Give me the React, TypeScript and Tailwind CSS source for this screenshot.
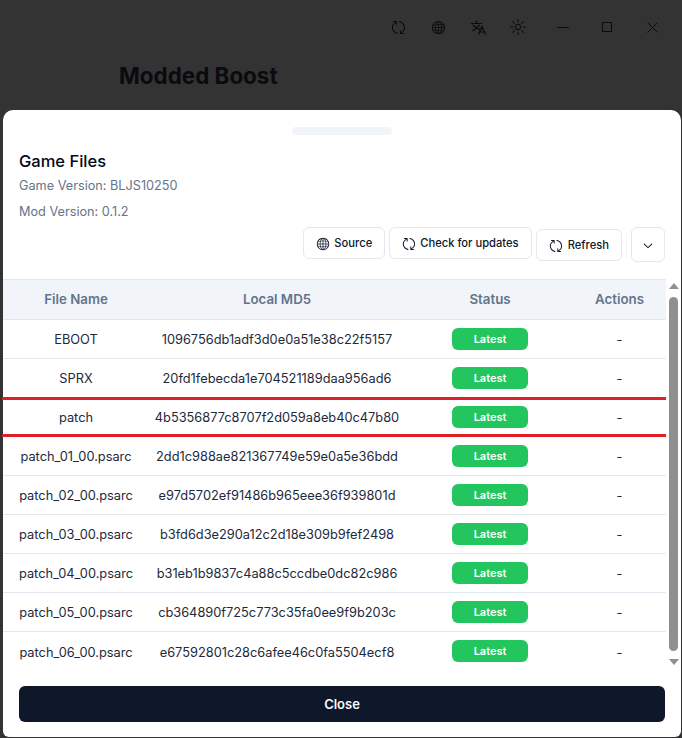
import React from 'react';
import { RxUpdate, RxGlobe, RxSun, RxChevronDown } from 'react-icons/rx';

const files = [
  ['EBOOT', '1096756db1adf3d0e0a51e38c22f5157'],
  ['SPRX', '20fd1febecda1e704521189daa956ad6'],
  ['patch', '4b5356877c8707f2d059a8eb40c47b80'],
  ['patch_01_00.psarc', '2dd1c988ae821367749e59e0a5e36bdd'],
  ['patch_02_00.psarc', 'e97d5702ef91486b965eee36f939801d'],
  ['patch_03_00.psarc', 'b3fd6d3e290a12c2d18e309b9fef2498'],
  ['patch_04_00.psarc', 'b31eb1b9837c4a88c5ccdbe0dc82c986'],
  ['patch_05_00.psarc', 'cb364890f725c773c35fa0ee9f9b203c'],
  ['patch_06_00.psarc', 'e67592801c28c6afee46c0fa5504ecf8'],
];

function Scrollbar() {
  return (
    <div className="w-[15px] shrink-0 flex flex-col items-center bg-white">
      <div className="mt-[4px] w-0 h-0 border-x-[5px] border-x-transparent border-b-[6px] border-b-[#8f8f8f]" />
      <div className="mt-[8px] w-[9px] h-[354px] rounded-full bg-[#8f8f8f]" />
      <div className="mt-[8px] w-0 h-0 border-x-[5px] border-x-transparent border-t-[6px] border-t-[#8f8f8f]" />
    </div>
  );
}

export default function App() {
  return (
    <div className="relative h-[738px] w-[682px] overflow-hidden bg-[#333333] flex flex-col font-['Inter',sans-serif]">
      {/* dimmed window behind the sheet */}
      <div className="h-[110px] shrink-0 relative">
        <div className="flex items-center pt-[19px] pl-[391px] text-[#0a0a0f]">
          <RxUpdate className="w-[15px] h-[15px]" />
          <RxGlobe className="ml-[25px] w-[15px] h-[15px]" />
          <svg className="ml-[25px] w-[15px] h-[15px]" viewBox="0 0 15 15" fill="none" stroke="currentColor" strokeWidth="1.2">
            <path d="M0 3.5h11M5.5 0.5v3M1.5 5l7.5 5M9 5l-7.5 6M7.5 14.5l3.5-8 3.5 8M8.8 12h4.4" />
          </svg>
          <RxSun className="ml-[24px] w-[16px] h-[16px]" />
          <svg className="ml-[31px] w-[12px] h-[12px]" viewBox="0 0 12 12" fill="none" stroke="currentColor" strokeWidth="1">
            <path d="M0 6.5h12" />
          </svg>
          <svg className="ml-[33px] w-[10px] h-[10px]" viewBox="0 0 10 10" fill="none" stroke="currentColor" strokeWidth="1">
            <rect x="0.5" y="0.5" width="9" height="9" />
          </svg>
          <svg className="ml-[35px] w-[11px] h-[11px]" viewBox="0 0 11 11" fill="none" stroke="currentColor" strokeWidth="1">
            <path d="M0.5 0.5l10 10M10.5 0.5l-10 10" />
          </svg>
        </div>
        <h1 className="mt-[27px] ml-[119px] text-[22.4px] leading-[28px] font-bold text-[#0a0a0f]">Modded Boost</h1>
      </div>

      {/* sheet */}
      <div className="flex-1 ml-[3px] mr-[1px] mb-[1px] bg-white rounded-t-[10px] rounded-b-[6px] flex flex-col min-h-0">
        <div className="mt-[17px] self-center w-[100px] h-[8px] rounded-full bg-[#f1f5f9]" />
        <div className="px-[16px] mt-[14px]">
          <h2 className="text-[16.5px] leading-[24px] font-medium text-[#020817]">Game Files</h2>
          <p className="mt-[3px] text-[12.7px] leading-[20px] text-[#64748b]">Game Version: BLJS10250</p>
          <p className="mt-[6px] text-[12.7px] leading-[20px] text-[#64748b]">Mod Version: 0.1.2</p>
        </div>

        <div className="mt-[5px] pr-[16px] flex justify-end items-start h-[36px] text-[11.2px] font-medium text-[#0f172a]">
          <button className="h-[32px] px-[12px] pt-px flex items-center gap-[4px] rounded-md border border-[#e2e8f0] bg-white">
            <RxGlobe className="w-[14px] h-[14px]" />
            Source
          </button>
          <button className="ml-[4px] h-[32px] px-[12px] pt-px flex items-center gap-[4px] rounded-md border border-[#e2e8f0] bg-white">
            <RxUpdate className="w-[14px] h-[14px]" />
            Check for updates
          </button>
          <button className="ml-[4px] mt-[2px] h-[32px] px-[12px] pt-px flex items-center gap-[5px] rounded-md border border-[#e2e8f0] bg-white">
            <RxUpdate className="w-[14px] h-[14px]" />
            Refresh
          </button>
          <div className="ml-[4px] mt-[6px] w-px h-[24px] bg-[#f1f5f9]" />
          <button className="ml-[4px] w-[34px] h-[35px] flex items-center justify-center rounded-md border border-[#e2e8f0] bg-white">
            <RxChevronDown className="w-[14px] h-[14px]" />
          </button>
        </div>

        <div className="mt-[16px] flex h-[391px] overflow-hidden">
          <table className="w-[663px] h-fit table-fixed border-collapse text-[12.8px] text-[#1e293b]">
            <colgroup>
              <col className="w-[146px]" />
              <col className="w-[256px]" />
              <col className="w-[170px]" />
              <col className="w-[91px]" />
            </colgroup>
            <thead>
              <tr className="h-[40px] bg-[#f1f5f9] border-y border-[#e2e8f0] text-[13.3px] text-[#64748b]">
                <th className="font-semibold">File Name</th>
                <th className="font-semibold">Local MD5</th>
                <th className="font-semibold">Status</th>
                <th className="pr-[2px] font-semibold">Actions</th>
              </tr>
            </thead>
            <tbody>
              {files.map(([name, md5]) => (
                <tr key={name} className="h-[39px] border-b border-[#e2e8f0] text-center last:border-b-0">
                  <td className="pt-[2px]">{name}</td>
                  <td className="pt-[2px]">{md5}</td>
                  <td>
                    <span className="inline-flex items-center justify-center w-[76px] h-[22px] rounded-md bg-[#22c55e] text-[11px] font-semibold text-white">
                      Latest
                    </span>
                  </td>
                  <td className="pt-[2px] pr-[2px]">-</td>
                </tr>
              ))}
            </tbody>
          </table>
          <Scrollbar />
        </div>

        <button className="mt-[16px] mx-[16px] h-[36px] pt-[2px] rounded-md bg-[#0f172a] text-[13px] font-semibold text-[#f8fafc]">
          Close
        </button>
      </div>

      {/* red annotation lines drawn over the patch row */}
      <div className="absolute left-[2px] top-[397px] w-[664px] h-[3px] bg-[#e01f26]" />
      <div className="absolute left-[2px] top-[434px] w-[664px] h-[3px] bg-[#e01f26]" />
    </div>
  );
}
